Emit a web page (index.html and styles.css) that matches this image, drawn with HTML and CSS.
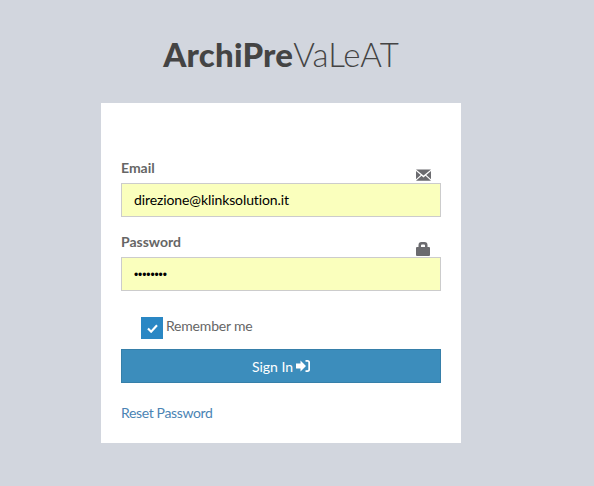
FILE: index.html
```html
<!DOCTYPE html>
<html lang="it">
<head>
  <meta charset="UTF-8" />
  <title>ArchiPreVaLeAT</title>
  <link rel="stylesheet" href="styles.css">
</head>
<body>
  <div class="login-box">
    <h1 class="logo"><b>ArchiPre</b>VaLeAT</h1>
    <form class="card">
      <div class="field">
        <label for="email">Email</label>
        <svg class="field-icon icon-mail" viewBox="0 0 16 12" width="15" height="12">
          <path fill="#6b6b6f" d="M0 0h16L8 6.500zM0 1.600 5 6 0 10.400zM16 1.600 11 6l5 4.400zM5.900 6.800 8 8.600l2.100-1.800L16 12H0z"/>
        </svg>
        <input id="email" type="text" value="direzione@klinksolution.it" />
      </div>
      <div class="field">
        <label for="password">Password</label>
        <svg class="field-icon icon-lock" viewBox="0 0 14 14" width="14" height="14">
          <path fill="#6b6b6f" d="M2.500 5V3a3 3 0 0 1 3-3h3a3 3 0 0 1 3 3v2h1.500a1 1 0 0 1 1 1v7a1 1 0 0 1-1 1H1a1 1 0 0 1-1-1V6a1 1 0 0 1 1-1zM5 5h4V3.500a1 1 0 0 0-1-1H6a1 1 0 0 0-1 1z"/>
        </svg>
        <input id="password" class="input-password" type="password" value="12345678" />
      </div>
      <div class="remember">
        <span class="check">
          <svg viewBox="0 0 12 10" width="11" height="9">
            <path fill="none" stroke="#fff" stroke-width="2.400" d="M1 5l3.500 3.500L11 1.500"/>
          </svg>
        </span>
        <span class="remember-text">Remember me</span>
      </div>
      <button type="button" class="btn-signin">Sign In
        <svg viewBox="0 0 14 12" width="14" height="12">
          <path fill="#fff" d="M0 3.500h4.500V.5L10 6l-5.500 5.500v-3H0z"/>
          <path fill="none" stroke="#fff" stroke-width="1.800" d="M9.500 .9h2a1.700 1.700 0 0 1 1.700 1.700v6.800a1.700 1.700 0 0 1-1.700 1.700h-2"/>
        </svg>
      </button>
      <a class="reset" href="#">Reset Password</a>
    </form>
  </div>
</body>
</html>
```

FILE: styles.css
```css
body {
  margin: 0;
  background-color: #d2d6de;
  font-family: 'Lato', sans-serif;
  font-size: 14px;
  color: #666;
  font-variant-ligatures: none;
}

.login-box {
  width: 360px;
  margin-left: 101px;
}

.logo {
  margin: 0;
  padding-top: 31px;
  height: 103px;
  box-sizing: border-box;
  line-height: 46px;
  text-align: center;
  font-size: 33px;
  font-weight: 300;
  color: #444;
}

.logo b {
  font-weight: 900;
  letter-spacing: 0.2px;
}

.card {
  height: 340px;
  box-sizing: border-box;
  padding: 54px 20px 0;
  background: #fff;
}

.field {
  position: relative;
  margin-bottom: 14px;
}

.field label {
  display: block;
  height: 26px;
  line-height: 22px;
  font-weight: 700;
  color: #666;
}

.field input {
  display: block;
  width: 100%;
  height: 34px;
  box-sizing: border-box;
  padding: 0 12px 2px;
  border: 1px solid #ccc;
  background: #faffbd;
  font-family: inherit;
  font-size: 14px;
  letter-spacing: -0.1px;
  color: #000;
  outline: none;
}

.field .input-password {
  padding-top: 2px;
  padding-bottom: 0;
  font-family: 'Liberation Sans', sans-serif;
  font-size: 12px;
}

.field-icon {
  position: absolute;
}

.icon-mail {
  right: 10px;
  bottom: 36px;
}

.icon-lock {
  right: 11px;
  bottom: 35px;
}

.remember {
  display: flex;
  align-items: flex-start;
  gap: 3px;
  margin: 26px 0 0 20px;
  height: 22px;
  color: #666;
  letter-spacing: -0.2px;
}

.remember-text {
  line-height: 18px;
}

.check {
  display: flex;
  align-items: center;
  justify-content: center;
  width: 22px;
  height: 22px;
  background: #2a87c4;
}

.btn-signin {
  display: flex;
  align-items: center;
  justify-content: center;
  gap: 3px;
  width: 100%;
  height: 34px;
  margin-top: 10px;
  border: 1px solid #367fa9;
  background: #3c8dbc;
  color: #fff;
  font-family: inherit;
  font-size: 14px;
}

.reset {
  display: block;
  margin-top: 20px;
  line-height: 20px;
  color: #4b84b4;
  text-decoration: none;
  letter-spacing: -0.35px;
}
```
